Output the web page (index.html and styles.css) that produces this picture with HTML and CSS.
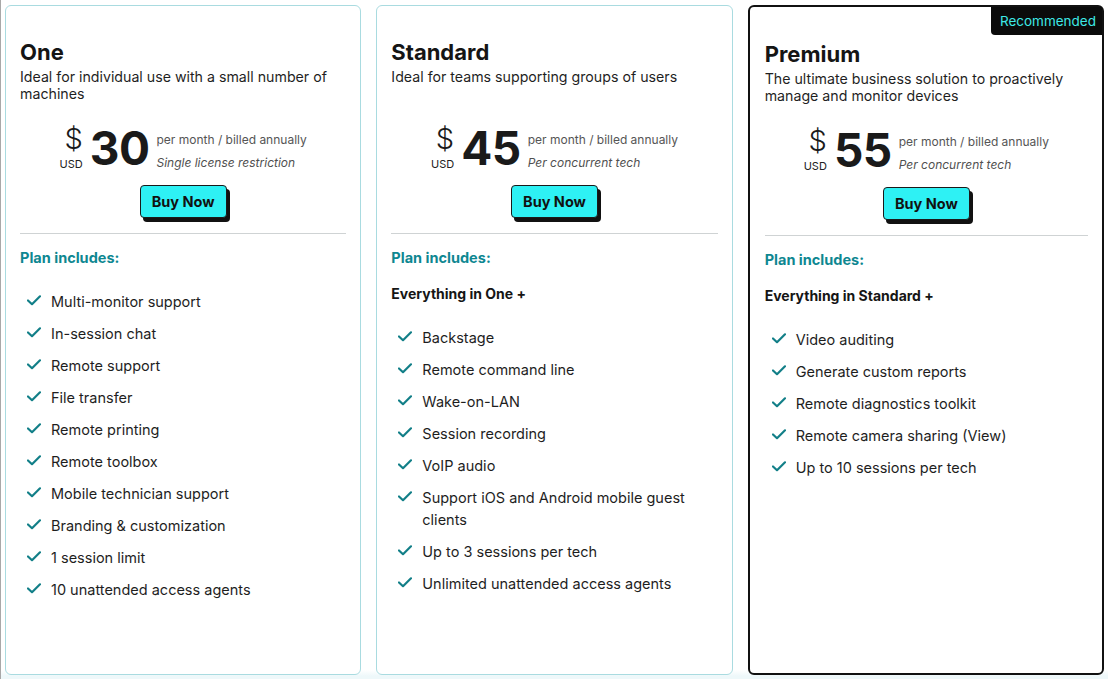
FILE: index.html
```html
<!DOCTYPE html>
<html lang="en">
<head>
<meta charset="utf-8">
<title>Pricing</title>
<link rel="stylesheet" href="styles.css">
</head>
<body>
<div class="plans">
  <section class="card">
    <header class="head">
      <h2 class="title">One</h2>
      <p class="desc">Ideal for individual use with a small number of machines</p>
    </header>
    <div class="price">
      <div class="cur"><span class="dollar">$</span><span class="usd">USD</span></div>
      <div class="amount">30</div>
      <div class="terms"><span>per month / billed annually</span><em>Single license restriction</em></div>
    </div>
    <div class="cta"><button class="buy">Buy Now</button></div>
    <hr class="rule">
    <h3 class="includes">Plan includes:</h3>
    <ul class="feats">
      <li><svg class="chk" viewBox="0 0 14 11"><path d="M1 5.5 L5 9.2 L13 1.3"/></svg>Multi-monitor support</li>
      <li><svg class="chk" viewBox="0 0 14 11"><path d="M1 5.5 L5 9.2 L13 1.3"/></svg>In-session chat</li>
      <li><svg class="chk" viewBox="0 0 14 11"><path d="M1 5.5 L5 9.2 L13 1.3"/></svg>Remote support</li>
      <li><svg class="chk" viewBox="0 0 14 11"><path d="M1 5.5 L5 9.2 L13 1.3"/></svg>File transfer</li>
      <li><svg class="chk" viewBox="0 0 14 11"><path d="M1 5.5 L5 9.2 L13 1.3"/></svg>Remote printing</li>
      <li><svg class="chk" viewBox="0 0 14 11"><path d="M1 5.5 L5 9.2 L13 1.3"/></svg>Remote toolbox</li>
      <li><svg class="chk" viewBox="0 0 14 11"><path d="M1 5.5 L5 9.2 L13 1.3"/></svg>Mobile technician support</li>
      <li><svg class="chk" viewBox="0 0 14 11"><path d="M1 5.5 L5 9.2 L13 1.3"/></svg>Branding &amp; customization</li>
      <li><svg class="chk" viewBox="0 0 14 11"><path d="M1 5.5 L5 9.2 L13 1.3"/></svg>1 session limit</li>
      <li><svg class="chk" viewBox="0 0 14 11"><path d="M1 5.5 L5 9.2 L13 1.3"/></svg>10 unattended access agents</li>
    </ul>
  </section>

  <section class="card">
    <header class="head">
      <h2 class="title">Standard</h2>
      <p class="desc">Ideal for teams supporting groups of users</p>
    </header>
    <div class="price">
      <div class="cur"><span class="dollar">$</span><span class="usd">USD</span></div>
      <div class="amount">45</div>
      <div class="terms"><span>per month / billed annually</span><em>Per concurrent tech</em></div>
    </div>
    <div class="cta"><button class="buy">Buy Now</button></div>
    <hr class="rule">
    <h3 class="includes">Plan includes:</h3>
    <p class="base">Everything in One +</p>
    <ul class="feats">
      <li><svg class="chk" viewBox="0 0 14 11"><path d="M1 5.5 L5 9.2 L13 1.3"/></svg>Backstage</li>
      <li><svg class="chk" viewBox="0 0 14 11"><path d="M1 5.5 L5 9.2 L13 1.3"/></svg>Remote command line</li>
      <li><svg class="chk" viewBox="0 0 14 11"><path d="M1 5.5 L5 9.2 L13 1.3"/></svg>Wake-on-LAN</li>
      <li><svg class="chk" viewBox="0 0 14 11"><path d="M1 5.5 L5 9.2 L13 1.3"/></svg>Session recording</li>
      <li><svg class="chk" viewBox="0 0 14 11"><path d="M1 5.5 L5 9.2 L13 1.3"/></svg>VoIP audio</li>
      <li><svg class="chk" viewBox="0 0 14 11"><path d="M1 5.5 L5 9.2 L13 1.3"/></svg>Support iOS and Android mobile guest clients</li>
      <li><svg class="chk" viewBox="0 0 14 11"><path d="M1 5.5 L5 9.2 L13 1.3"/></svg>Up to 3 sessions per tech</li>
      <li><svg class="chk" viewBox="0 0 14 11"><path d="M1 5.5 L5 9.2 L13 1.3"/></svg>Unlimited unattended access agents</li>
    </ul>
  </section>

  <section class="card card-rec">
    <span class="badge">Recommended</span>
    <header class="head">
      <h2 class="title">Premium</h2>
      <p class="desc">The ultimate business solution to proactively manage and monitor devices</p>
    </header>
    <div class="price">
      <div class="cur"><span class="dollar">$</span><span class="usd">USD</span></div>
      <div class="amount">55</div>
      <div class="terms"><span>per month / billed annually</span><em>Per concurrent tech</em></div>
    </div>
    <div class="cta"><button class="buy">Buy Now</button></div>
    <hr class="rule">
    <h3 class="includes">Plan includes:</h3>
    <p class="base">Everything in Standard +</p>
    <ul class="feats">
      <li><svg class="chk" viewBox="0 0 14 11"><path d="M1 5.5 L5 9.2 L13 1.3"/></svg>Video auditing</li>
      <li><svg class="chk" viewBox="0 0 14 11"><path d="M1 5.5 L5 9.2 L13 1.3"/></svg>Generate custom reports</li>
      <li><svg class="chk" viewBox="0 0 14 11"><path d="M1 5.5 L5 9.2 L13 1.3"/></svg>Remote diagnostics toolkit</li>
      <li><svg class="chk" viewBox="0 0 14 11"><path d="M1 5.5 L5 9.2 L13 1.3"/></svg>Remote camera sharing (View)</li>
      <li><svg class="chk" viewBox="0 0 14 11"><path d="M1 5.5 L5 9.2 L13 1.3"/></svg>Up to 10 sessions per tech</li>
    </ul>
  </section>
</div>
</body>
</html>
```

FILE: styles.css
```css
* { box-sizing: border-box; }

html, body {
  margin: 0;
  padding: 0;
  height: 100%;
}

body {
  background: #f1f9fa;
  font-family: Inter, "Liberation Sans", sans-serif;
  color: #1c1c1c;
  border-left: 1px solid #a8a8a8;
}

.plans {
  height: 679px;
  display: grid;
  grid-template-columns: 1fr 1fr 1fr;
  gap: 15px;
  padding: 5px 4px 4px 4px;
  background: linear-gradient(#fff 0, #fff 670px, #eef8fa 676px);
}

.card {
  position: relative;
  background: #fff;
  border: 1px solid #a9dbe0;
  border-radius: 6px;
  padding: 33px 14px 0 14px;
}

.card-rec {
  border: 2px solid #111;
  padding: 34px 14px 0 15px;
}

.badge {
  position: absolute;
  top: 0;
  right: 0;
  background: #0b0b0b;
  color: #3ee9e6;
  font-size: 13.5px;
  line-height: 28px;
  padding: 0 6px 0 9px;
  border-bottom-left-radius: 4px;
}

.head {
  min-height: 63px;
}

.title {
  margin: 0;
  font-size: 22px;
  line-height: 26px;
  font-weight: 700;
  color: #151515;
}

.desc {
  margin: 3px 0 0 0;
  font-size: 14.2px;
  line-height: 17px;
  color: #1f1f1f;
}

.price {
  display: flex;
  justify-content: center;
  align-items: flex-start;
  margin-top: 22px;
}

.cur {
  display: flex;
  flex-direction: column;
  align-items: flex-end;
}

.dollar {
  font-size: 29px;
  font-weight: 300;
  line-height: 36px;
  margin-top: -3px;
  color: #1a1a1a;
}

.usd {
  font-size: 11px;
  line-height: 14px;
  color: #222;
}

.amount {
  font-size: 46px;
  line-height: 48px;
  font-weight: 700;
  color: #1a1a1a;
  margin: 0 7px 0 7px;
  letter-spacing: -0.5px;
}

.terms {
  display: flex;
  flex-direction: column;
  padding-top: 4px;
  font-size: 12px;
  line-height: 23px;
  color: #555;
}

.terms em {
  font-style: italic;
  color: #505050;
}

.cta {
  display: flex;
  justify-content: center;
  margin-top: 11px;
}

.buy {
  font-family: Inter, "Liberation Sans", sans-serif;
  font-size: 14.5px;
  font-weight: 700;
  color: #111;
  background: #2ef1f4;
  border: 1px solid #1a1a1a;
  border-radius: 4px;
  height: 33px;
  padding: 0 11px;
  box-shadow: 3px 4px 0 #111;
}

.rule {
  border: 0;
  border-top: 1px solid #cfd3d4;
  margin: 15px 0 0 0;
}

.includes {
  margin: 14px 0 0 0;
  font-size: 14.5px;
  line-height: 20px;
  font-weight: 700;
  color: #0e8791;
}

.base {
  margin: 16px 0 0 0;
  font-size: 14px;
  line-height: 20px;
  font-weight: 700;
  color: #151515;
}

.feats {
  list-style: none;
  margin: 18px 0 0 0;
  padding: 0;
}

.feats li {
  position: relative;
  padding: 5px 0 5px 31px;
  font-size: 14.5px;
  line-height: 22px;
  color: #1e1e1e;
}

.chk {
  position: absolute;
  left: 7px;
  top: 9px;
  width: 14px;
  height: 11px;
  fill: none;
  stroke: #127f88;
  stroke-width: 2.2;
  stroke-linecap: round;
  stroke-linejoin: round;
}
```
